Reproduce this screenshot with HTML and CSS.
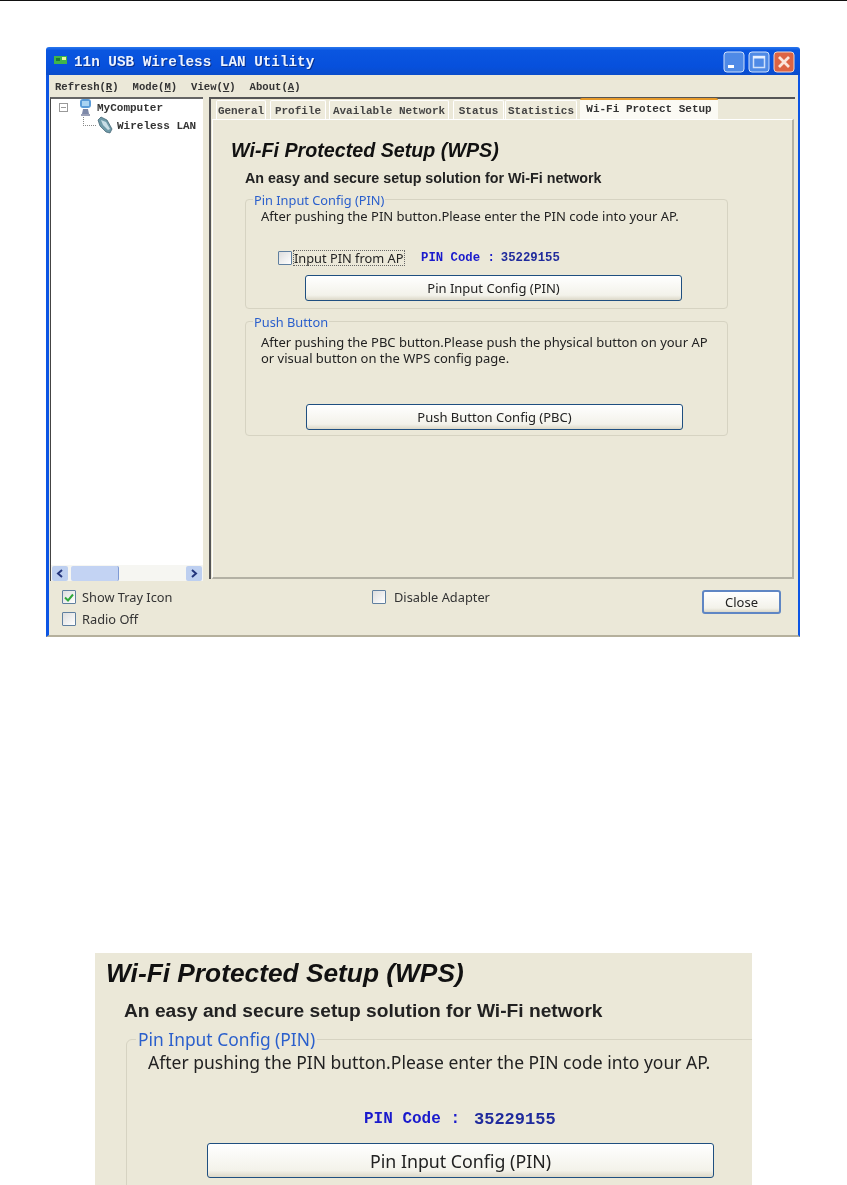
FILE: index.html
```html
<!DOCTYPE html>
<html lang="en">
<head>
<meta charset="UTF-8">
<meta name="viewport" content="width=device-width, initial-scale=1.0">
<title>Wi-Fi Protected Setup</title>
<link rel="stylesheet" href="styles.css">
</head>
<body>
<div class="topLine"></div>

<div class="window">
  <div class="titleBar">
    <svg class="appIcon" width="13" height="8" viewBox="0 0 13 8"><rect width="13" height="8" fill="#3fb54a"/><rect x="8" y="1" width="4" height="3" fill="#e8f5a0"/><rect x="2" y="2" width="4" height="3" fill="#1d7a35"/></svg>
    <span class="titleText">11n USB Wireless LAN Utility</span>
    <div class="winButtons">
      <svg width="22" height="22" viewBox="0 0 22 22"><rect x="1" y="1" width="20" height="20" rx="3" fill="#4f8ae6" stroke="#cfe0fa"/><rect x="5" y="14" width="6" height="3" fill="#fff"/></svg>
      <svg width="22" height="22" viewBox="0 0 22 22"><rect x="1" y="1" width="20" height="20" rx="3" fill="#4f8ae6" stroke="#cfe0fa"/><rect x="5.5" y="5.5" width="11" height="11" fill="none" stroke="#cfe0fa" stroke-width="1.5"/><rect x="5" y="5" width="12" height="2.5" fill="#e8f0ff"/></svg>
      <svg width="22" height="22" viewBox="0 0 22 22"><rect x="1" y="1" width="20" height="20" rx="3" fill="#dd6444" stroke="#f2d5c8"/><path d="M6 6 L16 16 M16 6 L6 16" stroke="#fbe6dc" stroke-width="2.8"/></svg>
    </div>
  </div>

  <div class="winBody">
    <div class="menuBar">
      <span>Refresh(<u>R</u>)</span>
      <span>Mode(<u>M</u>)</span>
      <span>View(<u>V</u>)</span>
      <span>About(<u>A</u>)</span>
    </div>

    <div class="panes">
      <div class="tree">
        <div class="treeItems">
          <div class="treeRow">
            <span class="minusBox"></span>
            <svg width="15" height="18" viewBox="0 0 15 18"><rect x="2" y="0" width="11" height="9" rx="3" fill="#5a9bd8"/><rect x="4" y="2" width="7" height="5" fill="#a9d3f2"/><path d="M5 10 h5 l1 5 h-7z" fill="#7d88a8"/><rect x="3" y="15" width="9" height="2" fill="#9aa0b8"/></svg>
            <span>MyComputer</span>
          </div>
          <div class="treeRow treeChild">
            <span class="treeLine"></span>
            <svg width="18" height="19" viewBox="0 0 18 19"><path d="M2 4 L5 1 L11 4 L16 13 L14 17 L10 16 L4 10z" fill="#6f9aa8" stroke="#3b5c6c" stroke-width=".7"/><path d="M5 4 L10 6 L14 13 L12 14 L7 9z" fill="#c9dee6"/></svg>
            <span class="lanLabel">Wireless LAN</span>
          </div>
        </div>
        <div class="scrollBar">
          <span class="scrollBtn">
            <svg width="8" height="9" viewBox="0 0 8 9"><path d="M6 1 L2 4.5 L6 8" fill="none" stroke="#23357c" stroke-width="2"/></svg>
          </span>
          <span class="scrollThumb"></span>
          <span class="scrollBtn">
            <svg width="8" height="9" viewBox="0 0 8 9"><path d="M2 1 L6 4.5 L2 8" fill="none" stroke="#23357c" stroke-width="2"/></svg>
          </span>
        </div>
      </div>

      <div class="tabPane">
        <div class="tabs">
          <span class="tab tabGeneral">General</span>
          <span class="tab tabProfile">Profile</span>
          <span class="tab tabNetwork">Available Network</span>
          <span class="tab tabStatus">Status</span>
          <span class="tab tabStats">Statistics</span>
          <span class="tab tabActive">Wi-Fi Protect Setup</span>
        </div>
        <div class="tabBody">
          <h1 class="wpsTitle">Wi-Fi Protected Setup (WPS)</h1>
          <h2 class="wpsSub">An easy and secure setup solution for Wi-Fi network</h2>

          <div class="group groupPin">
            <span class="legend">Pin Input Config (PIN)</span>
            <p class="groupText">After pushing the PIN button.Please enter the PIN code into your AP.</p>
            <div class="pinRow">
              <span class="check"></span>
              <span class="pinLabel">Input PIN from AP</span>
              <span class="pinCode">PIN Code :</span>
              <span class="pinValue">35229155</span>
            </div>
            <div class="xpButton wideButton">Pin Input Config (PIN)</div>
          </div>

          <div class="group groupPush">
            <span class="legend">Push Button</span>
            <p class="groupText">After pushing the PBC button.Please push the physical button on your AP<br>or visual button on the WPS config page.</p>
            <div class="xpButton wideButton pushButton">Push Button Config (PBC)</div>
          </div>
        </div>
      </div>
    </div>

    <div class="footer">
      <div class="footChecks">
        <label class="footCheck">
          <span class="check">
            <svg width="10" height="9" viewBox="0 0 10 9"><path d="M1 4.5 L4 7.5 L9 1.5" fill="none" stroke="#2fa83a" stroke-width="2"/></svg>
          </span>
          Show Tray Icon
        </label>
        <label class="footCheck"><span class="check"></span>Radio Off</label>
      </div>
      <label class="footCheck footDisable"><span class="check"></span>Disable Adapter</label>
      <div class="xpButton closeButton">Close</div>
    </div>
  </div>
</div>

<div class="zoomCrop">
  <h1 class="zoomTitle">Wi-Fi Protected Setup (WPS)</h1>
  <h2 class="zoomSub">An easy and secure setup solution for Wi-Fi network</h2>
  <div class="zoomGroup">
    <span class="zoomLegend">Pin Input Config (PIN)</span>
    <p class="zoomText">After pushing the PIN button.Please enter the PIN code into your AP.</p>
    <div class="zoomPin">
      <span class="zoomCode">PIN Code :</span>
      <span class="zoomValue">35229155</span>
    </div>
    <div class="xpButton zoomButton">Pin Input Config (PIN)</div>
  </div>
</div>
</body>
</html>
```

FILE: styles.css
```css
* {
  box-sizing: border-box;
}
html, body {
  height: 1185px;
  overflow: hidden;
}
body {
  margin: 0;
  background: #fff;
  color: #222;
  font-family: 'Noto Sans', 'Liberation Sans', sans-serif;
}
.topLine {
  height: 1px;
  background: #111;
}

/* main window */
.window {
  width: 754px;
  height: 590px;
  margin: 46px 0 0 46px;
  display: flex;
  flex-direction: column;
  filter: blur(0.5px);
}
.titleBar {
  height: 28px;
  flex: none;
  display: flex;
  align-items: center;
  padding: 0 5px 0 8px;
  background: linear-gradient(180deg, #2a78ee 0, #0a56e0 12%, #0750dc 70%, #0a4ccb 100%);
  border-radius: 3px 3px 0 0;
}
.appIcon {
  margin-right: 7px;
  margin-top: -3px;
}
.titleText {
  margin-top: 2px;
  color: #eaf2ff;
  font: bold 14.3px 'Liberation Mono', monospace;
  text-shadow: 1px 1px 0 #0a2f8a;
}
.winButtons {
  display: flex;
  gap: 3px;
  margin-left: auto;
  margin-top: 1px;
}
.winBody {
  flex: 1;
  display: flex;
  flex-direction: column;
  min-height: 0;
  background: #ebe8d8;
  border-left: 3px solid #0c55e4;
  border-right: 2px solid #0c55e4;
  border-bottom: 2px solid #b5b09c;
}
.menuBar {
  height: 22px;
  flex: none;
  display: flex;
  align-items: center;
  gap: 14px;
  padding: 2px 0 0 6px;
  color: #333;
  font: bold 10.6px 'Liberation Mono', monospace;
}
.panes {
  height: 484px;
  flex: none;
  display: flex;
  gap: 6px;
  padding-left: 1px;
}

/* left tree */
.tree {
  width: 153px;
  display: flex;
  flex-direction: column;
  background: #fff;
  border-left: 1px solid #444;
  border-top: 2px solid #666;
}
.treeItems {
  flex: 1;
  font: bold 11px 'Liberation Mono', monospace;
  color: #333;
}
.treeRow {
  display: flex;
  align-items: center;
  height: 17px;
  margin-left: 8px;
}
.minusBox {
  width: 9px;
  height: 9px;
  margin-right: 10px;
  border: 1px solid #999;
  background: linear-gradient(#999, #999) center / 5px 1px no-repeat;
}
.treeRow > svg {
  margin-right: 4px;
}
.treeChild {
  height: 19px;
  margin-left: 32px;
}
.treeChild > svg {
  margin-right: 3px;
}
.treeLine {
  width: 13px;
  height: 9px;
  margin-top: -8px;
  border-left: 1px dotted #888;
  border-bottom: 1px dotted #888;
}
.scrollBar {
  height: 16px;
  flex: none;
  display: flex;
  align-items: center;
  justify-content: space-between;
  padding: 0 1px;
  background: #f6f6f2;
}
.scrollBtn {
  width: 16px;
  height: 15px;
  display: flex;
  align-items: center;
  justify-content: center;
  background: #bdcff0;
  border-radius: 2px;
}
.scrollThumb {
  width: 48px;
  height: 15px;
  margin: 0 auto 0 3px;
  background: #c3d3f3;
  border-right: 1px solid #7f9ad4;
  border-radius: 2px;
}

/* tab pane */
.tabPane {
  width: 586px;
  height: 482px;
  display: flex;
  flex-direction: column;
  border-top: 2px solid #555;
  border-left: 2px solid #555;
}
.tabs {
  height: 20px;
  flex: none;
  display: flex;
  align-items: flex-end;
  padding-left: 5px;
  color: #444;
  font: bold 11px 'Liberation Mono', monospace;
}
.tab {
  height: 19px;
  display: flex;
  align-items: center;
  justify-content: center;
  padding-top: 1px;
  background: #eeebdc;
  border: 1px solid #fff;
  border-bottom: none;
  border-radius: 2px 2px 0 0;
}
.tabGeneral { width: 50px; margin-right: 4px; }
.tabProfile { width: 56px; margin-right: 3px; }
.tabNetwork { width: 120px; margin-right: 4px; }
.tabStatus { width: 51px; margin-right: 1px; }
.tabStats { width: 72px; margin-right: 3px; }
.tabActive {
  width: 138px;
  height: 21px;
  padding: 0 0 2px;
  background: #fbfaf4;
  border: none;
  border-top: 2px solid #e69a2a;
  color: #333;
}
.tabBody {
  flex: 1;
  width: 582px;
  margin-left: 1px;
  padding: 0 0 0 18px;
  background: #ebe8d8;
  border-top: 1px solid #fff;
  border-left: 1px solid #fff;
  border-right: 2px solid #b3b1a4;
  border-bottom: 2px solid #b3b1a4;
}
.wpsTitle {
  margin: 18px 0 0;
  color: #111;
  font: italic bold 19.7px/24px 'Liberation Sans', sans-serif;
}
.wpsSub {
  margin: 8px 0 0 14px;
  color: #222;
  font: bold 14.3px/16px 'Liberation Sans', sans-serif;
}
.group {
  position: relative;
  width: 483px;
  margin-left: 14px;
  border: 1px solid #d6d3c2;
  border-radius: 4px;
}
.groupPin {
  height: 110px;
  margin-top: 13px;
}
.groupPush {
  height: 115px;
  margin-top: 12px;
}
.legend {
  position: absolute;
  top: -7px;
  left: 7px;
  padding: 0 1px;
  background: #ebe8d8;
  color: #2a5fcc;
  font-size: 12.8px;
  line-height: 14px;
}
.groupText {
  margin: 8px 0 0 15px;
  font-size: 13px;
  line-height: 16px;
  white-space: nowrap;
}
.groupPush .groupText {
  margin-top: 12px;
}
.pinRow {
  display: flex;
  align-items: center;
  height: 18px;
  margin: 25px 0 0 32px;
  font-size: 12.8px;
}
.check {
  width: 14px;
  height: 14px;
  flex: none;
  display: flex;
  align-items: center;
  justify-content: center;
  background: linear-gradient(135deg, #ddd, #fff);
  border: 1px solid #5f7f9f;
  border-radius: 1px;
}
.pinLabel {
  width: 112px;
  margin-left: 1px;
  white-space: nowrap;
  border: 1px dotted #666;
  line-height: 14px;
}
.pinCode {
  margin-left: 16px;
  color: #1a1acc;
  font: bold 12.3px 'Liberation Mono', monospace;
}
.pinValue {
  margin-left: 6px;
  color: #1f2a9c;
  font: bold 12.3px 'Liberation Mono', monospace;
}
.xpButton {
  display: flex;
  align-items: center;
  justify-content: center;
  background: linear-gradient(180deg, #fff, #f3f2ea 80%, #dcd8c8);
  border: 1px solid #1f4f80;
  border-radius: 3px;
  color: #222;
  font-size: 13px;
}
.wideButton {
  width: 377px;
  height: 26px;
  margin: 8px 0 0 59px;
}
.pushButton {
  margin: 38px 0 0 60px;
}

/* bottom of the window */
.footer {
  flex: 1;
  display: flex;
  align-items: flex-start;
  padding: 9px 0 0 13px;
  font-size: 12.8px;
  color: #333;
}
.footChecks {
  width: 310px;
  display: flex;
  flex-direction: column;
  gap: 8px;
}
.footCheck {
  display: flex;
  align-items: center;
  gap: 6px;
  height: 14px;
}
.footDisable {
  gap: 8px;
}
.closeButton {
  width: 79px;
  height: 24px;
  margin-left: auto;
  margin-right: 17px;
  border: 2px solid #5f86c4;
}

/* enlarged crop under the window */
.zoomCrop {
  width: 657px;
  height: 232px;
  margin: 316px 0 0 95px;
  overflow: hidden;
  padding: 4px 0 0 11px;
  background: #ebe8d8;
  filter: blur(0.5px);
}
.zoomTitle {
  margin: 0;
  color: #111;
  font: italic bold 26.3px/32px 'Liberation Sans', sans-serif;
}
.zoomSub {
  margin: 11px 0 0 18px;
  color: #222;
  font: bold 19.2px/22px 'Liberation Sans', sans-serif;
}
.zoomGroup {
  position: relative;
  width: 700px;
  height: 180px;
  margin: 17px 0 0 20px;
  border: 1px solid #d6d3c2;
  border-radius: 6px;
}
.zoomLegend {
  position: absolute;
  top: -11px;
  left: 9px;
  padding: 0 2px;
  background: #ebe8d8;
  color: #2a5fcc;
  font-size: 17.4px;
  line-height: 20px;
}
.zoomText {
  margin: 12px 0 0 21px;
  font-size: 17.5px;
  line-height: 21px;
  white-space: nowrap;
}
.zoomPin {
  display: flex;
  align-items: center;
  height: 22px;
  margin: 35px 0 0 237px;
}
.zoomCode {
  color: #1a1acc;
  font: bold 16px 'Liberation Mono', monospace;
}
.zoomValue {
  margin-left: 14px;
  color: #1f2a9c;
  font: bold 17px 'Liberation Mono', monospace;
}
.zoomButton {
  width: 507px;
  height: 35px;
  margin: 13px 0 0 80px;
  font-size: 17.8px;
}
```
